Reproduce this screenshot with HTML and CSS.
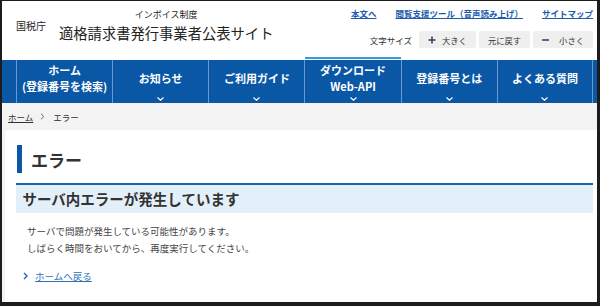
FILE: index.html
```html
<!DOCTYPE html>
<html lang="ja">
<head>
<meta charset="utf-8">
<title>エラー | 適格請求書発行事業者公表サイト</title>
<link rel="stylesheet" href="styles.css">
</head>
<body>
<div class="frame">
  <header class="site-header">
    <div class="header-inner">
      <div class="brand">
        <span class="agency">国税庁</span>
        <div class="title-block">
          <span class="title-sub">インボイス制度</span>
          <span class="title-main">適格請求書発行事業者公表サイト</span>
        </div>
      </div>
      <div class="utility">
        <ul class="util-links">
          <li><a href="#">本文へ</a></li>
          <li><a href="#">閲覧支援ツール（音声読み上げ）</a></li>
          <li><a href="#">サイトマップ</a></li>
        </ul>
        <div class="font-size">
          <span class="fs-label">文字サイズ</span>
          <button class="fs-btn" type="button"><svg class="fs-icon" width="8" height="8" viewBox="0 0 8 8"><path d="M4 0.5V7.5M0.5 4H7.5" stroke="#2c3e5c" stroke-width="1.5" fill="none"/></svg><span class="fs-gap-l">大きく</span></button>
          <button class="fs-btn" type="button">元に戻す</button>
          <button class="fs-btn" type="button"><svg class="fs-icon" width="7" height="8" viewBox="0 0 7 8"><path d="M0 4H7" stroke="#2c3e5c" stroke-width="1.5" fill="none"/></svg><span class="fs-gap-s">小さく</span></button>
        </div>
      </div>
    </div>
  </header>

  <nav class="gnav">
    <ul class="gnav-list">
      <li class="gnav-item"><span class="gnav-label">ホーム<br>(登録番号を検索)</span><span class="gnav-chev"></span></li>
      <li class="gnav-item"><span class="gnav-label">お知らせ</span><svg class="gnav-chev" width="7" height="4" viewBox="0 0 7 4"><path d="M0.5 0.5L3.5 3.2L6.5 0.5" stroke="#fff" stroke-width="1.2" fill="none"/></svg></li>
      <li class="gnav-item"><span class="gnav-label">ご利用ガイド</span><svg class="gnav-chev" width="7" height="4" viewBox="0 0 7 4"><path d="M0.5 0.5L3.5 3.2L6.5 0.5" stroke="#fff" stroke-width="1.2" fill="none"/></svg></li>
      <li class="gnav-item is-active"><span class="gnav-label">ダウンロード<br>Web-API</span><svg class="gnav-chev" width="7" height="4" viewBox="0 0 7 4"><path d="M0.5 0.5L3.5 3.2L6.5 0.5" stroke="#fff" stroke-width="1.2" fill="none"/></svg></li>
      <li class="gnav-item"><span class="gnav-label">登録番号とは</span><svg class="gnav-chev" width="7" height="4" viewBox="0 0 7 4"><path d="M0.5 0.5L3.5 3.2L6.5 0.5" stroke="#fff" stroke-width="1.2" fill="none"/></svg></li>
      <li class="gnav-item"><span class="gnav-label">よくある質問</span><svg class="gnav-chev" width="7" height="4" viewBox="0 0 7 4"><path d="M0.5 0.5L3.5 3.2L6.5 0.5" stroke="#fff" stroke-width="1.2" fill="none"/></svg></li>
    </ul>
  </nav>

  <div class="breadcrumb">
    <a href="#" class="bc-link">ホーム</a>
    <svg class="bc-sep" width="5" height="7" viewBox="0 0 5 7"><path d="M1 0.8L3.8 3.5L1 6.2" stroke="#666" stroke-width="1" fill="none"/></svg>
    <span class="bc-current">エラー</span>
  </div>

  <main class="card">
    <h1 class="page-title">エラー</h1>
    <h2 class="section-title">サーバ内エラーが発生しています</h2>
    <p class="message">サーバで問題が発生している可能性があります。<br>しばらく時間をおいてから、再度実行してください。</p>
    <p class="back"><svg class="back-chev" width="5" height="8" viewBox="0 0 5 8"><path d="M1 1L4 4L1 7" stroke="#2f6fb8" stroke-width="1.5" fill="none"/></svg><a href="#" class="back-link">ホームへ戻る</a></p>
  </main>
</div>
</body>
</html>
```

FILE: styles.css
```css
* { box-sizing: border-box; }
html, body { margin: 0; padding: 0; }
body {
  font-family: "Noto Sans CJK JP", "Noto Sans", sans-serif;
  color: #333;
  background: #fff;
}
ul { list-style: none; margin: 0; padding: 0; }
a { color: inherit; }

.frame {
  width: 600px;
  height: 306px;
  overflow: hidden;
  border-style: solid;
  border-color: #1c1c1c;
  border-width: 1px 3px 4px 2px;
  background: #f3f3f3;
  display: flex;
  flex-direction: column;
}

/* header */
.site-header { height: 59px; background: #fff; flex: none; }
.header-inner {
  margin-left: 14px;
  width: 577px;
  height: 100%;
  display: flex;
  justify-content: space-between;
}
.brand { display: flex; align-items: flex-start; }
.agency { font-size: 10px; line-height: 14px; margin-top: 18px; color: #222; }
.title-block { margin-left: 13px; display: flex; flex-direction: column; align-items: center; }
.title-sub { font-size: 9px; line-height: 12px; margin-top: 8px; color: #222; }
.title-main { font-size: 14.3px; line-height: 18px; margin-top: 3px; color: #222; }

.utility { display: flex; flex-direction: column; align-items: flex-end; }
.util-links { display: flex; gap: 19px; padding-top: 6px; }
.util-links a {
  font-size: 8.5px;
  line-height: 12px;
  font-weight: bold;
  color: #1a5bab;
  text-decoration: underline;
  display: block;
}
.font-size { display: flex; align-items: center; margin-top: 12px; }
.fs-label { font-size: 8.5px; color: #333; margin-right: 7px; }
.fs-btn {
  font-family: inherit;
  font-size: 8.3px;
  color: #333;
  height: 17px;
  padding: 0 9px;
  margin-left: 3px;
  border: 0;
  border-radius: 2px;
  background: #efefef;
  display: flex;
  align-items: center;
}
.fs-btn:first-of-type { margin-left: 0; }
.fs-icon { display: block; }
.fs-gap-l { margin-left: 6px; }
.fs-gap-s { margin-left: 10px; }

/* global nav */
.gnav { background: #0a57a6; height: 43px; flex: none; }
.gnav-list {
  margin-left: 14px;
  width: 577px;
  height: 100%;
  display: grid;
  grid-template-columns: repeat(6, 1fr);
}
.gnav-item {
  position: relative;
  border-left: 1px solid #6b98cf;
  color: #fff;
  font-weight: bold;
  font-size: 11px;
  display: flex;
  flex-direction: column;
  align-items: center;
}
.gnav-item:last-child { border-right: 1px solid #6b98cf; }
.gnav-label {
  height: 37px;
  display: flex;
  align-items: center;
  justify-content: center;
  text-align: center;
  line-height: 15.5px;
}
.gnav-chev { display: block; }
.is-active::before {
  content: "";
  position: absolute;
  top: -3px;
  left: 0;
  right: 0;
  height: 2px;
  background: #2f9be0;
}

/* breadcrumb */
.breadcrumb {
  height: 27px;
  flex: none;
  display: flex;
  align-items: center;
  padding-left: 6px;
  font-size: 8.5px;
  color: #333;
}
.bc-link { text-decoration: underline; color: #333; }
.bc-sep { margin: 0 8px 0 7px; display: block; }

/* card */
.card {
  flex: 1;
  background: #fff;
  margin-left: 3px;
  border-top-left-radius: 4px;
  padding: 15px 4px 0 11px;
}
.page-title {
  margin: 0 0 0 1px;
  height: 28px;
  display: flex;
  align-items: center;
  border-left: 5px solid #0a57a6;
  padding-left: 9px;
  font-size: 17px;
  font-weight: bold;
  color: #333;
}
.section-title {
  margin: 10px 0 0;
  border-top: 2px solid #1564b4;
  background: #e4f0f9;
  height: 30px;
  line-height: 27px;
  padding-left: 6.5px;
  font-size: 14.5px;
  font-weight: bold;
  color: #333;
}
.message {
  margin: 9.5px 0 0 11px;
  font-size: 9.5px;
  line-height: 17px;
  color: #444;
}
.back {
  margin: 11px 0 0 7px;
  display: flex;
  align-items: center;
  font-size: 9.5px;
  line-height: 17px;
}
.back-chev { display: block; margin-right: 7px; }
.back-link { color: #2f6fb8; text-decoration: underline; }
```
